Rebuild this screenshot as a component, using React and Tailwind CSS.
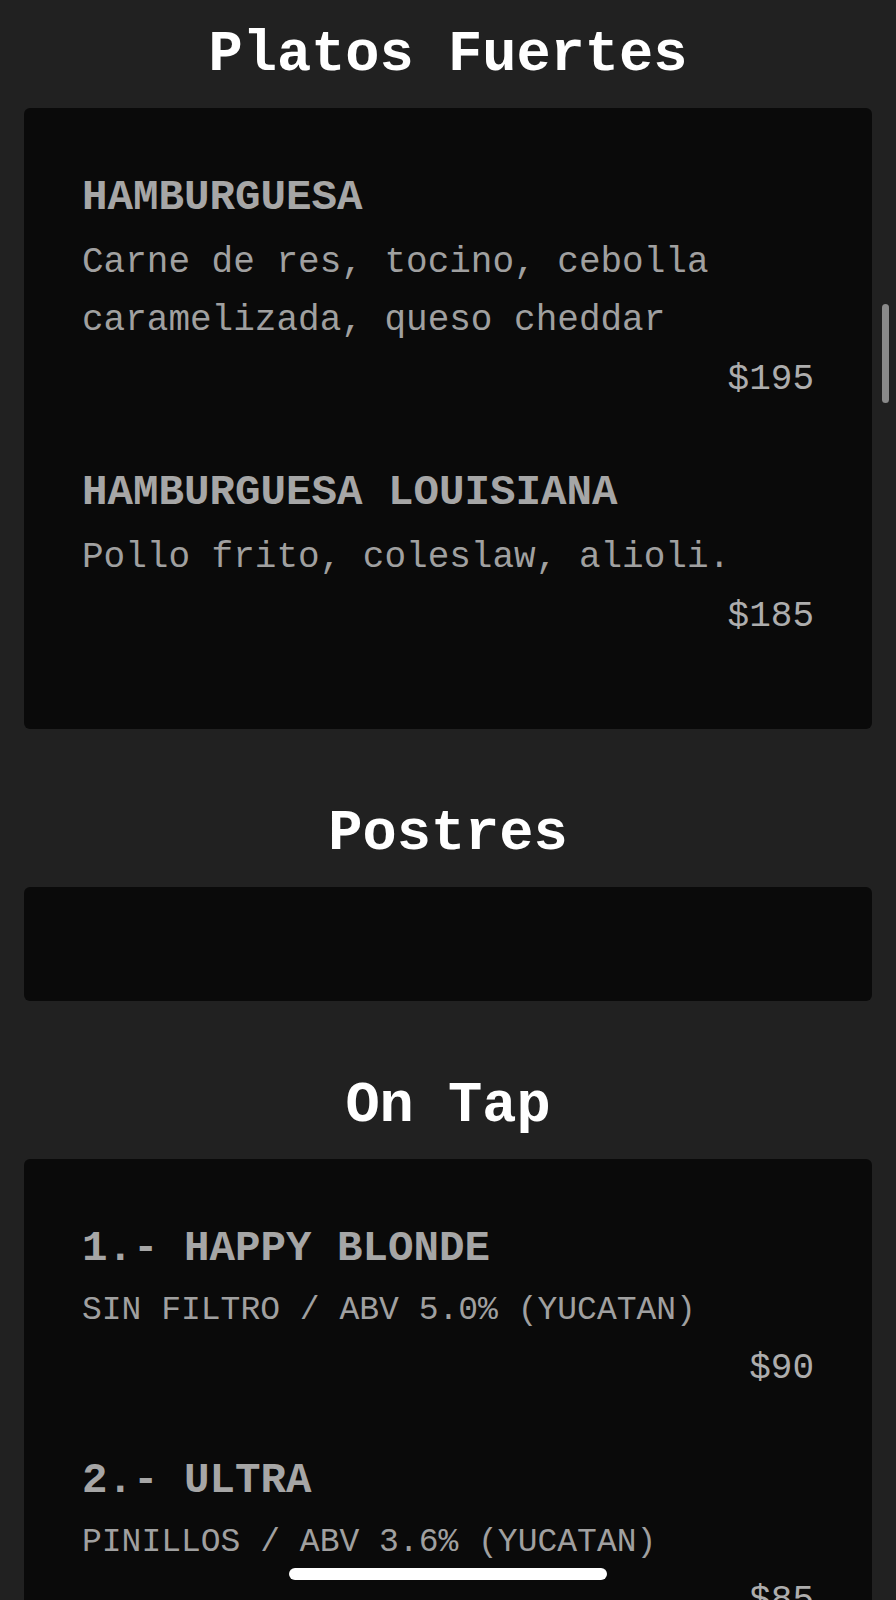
import React from "react";

const sections = [
  {
    title: "Platos Fuertes",
    items: [
      {
        name: "HAMBURGUESA",
        desc: "Carne de res, tocino, cebolla caramelizada, queso cheddar",
        price: "$195",
      },
      {
        name: "HAMBURGUESA LOUISIANA",
        desc: "Pollo frito, coleslaw, alioli.",
        price: "$185",
      },
    ],
  },
  { title: "Postres", items: [] },
  {
    title: "On Tap",
    beer: true,
    items: [
      {
        name: "1.- HAPPY BLONDE",
        desc: "SIN FILTRO / ABV 5.0% (YUCATAN)",
        price: "$90",
      },
      {
        name: "2.- ULTRA",
        desc: "PINILLOS / ABV 3.6% (YUCATAN)",
        price: "$85",
      },
    ],
  },
];

function MenuItem({ item, beer }) {
  return (
    <div className="flex flex-col">
      <h3 className="text-[42.5px] leading-[50px] font-bold text-[#a6a6a6]">
        {item.name}
      </h3>
      <p
        className={
          beer
            ? "mt-[11px] text-[33px] leading-[1.6] text-[#a0a0a0]"
            : "mt-[11px] text-[36px] leading-[1.6] text-[#a0a0a0]"
        }
      >
        {item.desc}
      </p>
      <p className="mt-[2px] text-right text-[36px] leading-[1.6] text-[#adadad]">
        {item.price}
      </p>
    </div>
  );
}

export default function App() {
  return (
    <div
      className="relative h-[1600px] overflow-hidden bg-[#212121] px-6 pt-[22px]"
      style={{ fontFamily: '"Liberation Mono", "Courier New", monospace' }}
    >
      <div className="flex flex-col gap-[72px]">
        {sections.map((section) => (
          <section key={section.title}>
            <h2 className="mb-[19px] text-center text-[57px] leading-[67px] font-bold text-white">
              {section.title}
            </h2>

            {section.items.length === 0 ? (
              <div className="h-[114px] rounded-md bg-[#0a0a0a]" />
            ) : (
              <div className="flex flex-col gap-[59px] rounded-md bg-[#0a0a0a] px-[58px] pt-[65px] pb-[83px]">
                {section.items.map((item) => (
                  <MenuItem key={item.name} item={item} beer={section.beer} />
                ))}
              </div>
            )}
          </section>
        ))}
      </div>

      {/* scroll indicator */}
      <div className="absolute left-[882px] top-[304px] h-[99px] w-[7px] rounded-full bg-[#8a8a8a]" />

      {/* home indicator */}
      <div className="absolute left-[289px] top-[1568px] h-[12px] w-[318px] rounded-full bg-white" />
    </div>
  );
}
